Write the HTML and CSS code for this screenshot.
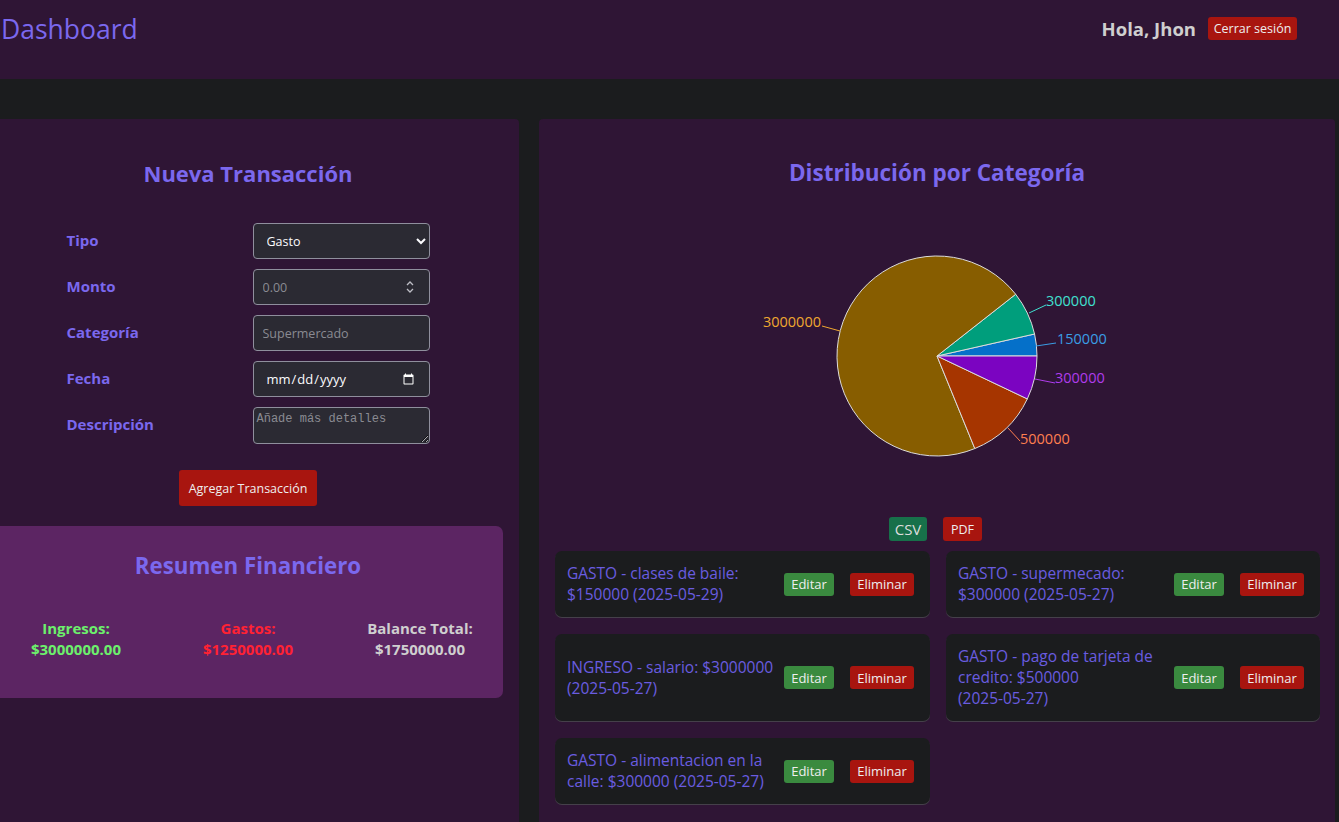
FILE: index.html
```html
<!DOCTYPE html>
<html lang="es">
<head>
<meta charset="utf-8">
<title>Dashboard</title>
<link rel="stylesheet" href="styles.css">
</head>
<body>
<header class="topbar">
  <h1 class="brand">Dashboard</h1>
  <div class="user">
    <span class="hello">Hola, Jhon</span>
    <button class="btn btn-red btn-logout">Cerrar sesión</button>
  </div>
</header>

<main class="layout">
  <section class="panel panel-left">
    <h2 class="panel-title">Nueva Transacción</h2>
    <form class="tx-form">
      <label class="f-label" for="tipo">Tipo</label>
      <select id="tipo" class="f-input">
        <option>Gasto</option>
        <option>Ingreso</option>
      </select>

      <label class="f-label" for="monto">Monto</label>
      <div class="num-wrap">
        <input id="monto" class="f-input f-num" type="number" placeholder="0.00">
        <svg class="spin" width="10" height="14" viewBox="0 0 10 14"><path d="M2 5 L5 2 L8 5 M2 9 L5 12 L8 9" fill="none" stroke="#bdbdc5" stroke-width="1.3"/></svg>
      </div>

      <label class="f-label" for="cat">Categoría</label>
      <input id="cat" class="f-input" type="text" placeholder="Supermercado">

      <label class="f-label" for="fecha">Fecha</label>
      <input id="fecha" class="f-input f-date" type="date">

      <label class="f-label" for="desc">Descripción</label>
      <textarea id="desc" class="f-input f-area" placeholder="Añade más detalles"></textarea>

      <div class="f-actions">
        <button type="button" class="btn btn-red btn-add">Agregar Transacción</button>
      </div>
    </form>

    <div class="summary">
      <h2 class="panel-title summary-title">Resumen Financiero</h2>
      <div class="stats">
        <div class="stat stat-in">Ingresos:<br>$3000000.00</div>
        <div class="stat stat-out">Gastos:<br>$1250000.00</div>
        <div class="stat stat-bal">Balance Total:<br>$1750000.00</div>
      </div>
    </div>
  </section>

  <section class="panel panel-right">
    <h2 class="panel-title title-chart">Distribución por Categoría</h2>
    <svg class="chart" viewBox="555 211 764 290" width="764" height="290">
      <g stroke="#dcdcdc" stroke-width="1">
        <path d="M937,356 L1037,356 A100,100 0 0,0 1034.55,334.01 Z" fill="#0570c9"/>
        <path d="M937,356 L1034.55,334.01 A100,100 0 0,0 1015.68,294.28 Z" fill="#009e7c"/>
        <path d="M937,356 L1015.68,294.28 A100,100 0 1,0 974.84,448.56 Z" fill="#875d00"/>
        <path d="M937,356 L974.84,448.56 A100,100 0 0,0 1027.32,398.91 Z" fill="#a63500"/>
        <path d="M937,356 L1027.32,398.91 A100,100 0 0,0 1037,356 Z" fill="#7b04c1"/>
      </g>
      <g fill="none" stroke-width="1">
        <polyline points="840,331 822,326" stroke="#f0a830"/>
        <polyline points="1029,313 1046,305" stroke="#40e0d0"/>
        <polyline points="1036,346 1056,343" stroke="#3a9ee6"/>
        <polyline points="1035,379 1055,383" stroke="#b03cec"/>
        <polyline points="1008,428 1020,441" stroke="#ff7f50"/>
      </g>
      <g class="chart-labels">
        <text x="821" y="327" text-anchor="end" fill="#f0a830">3000000</text>
        <text x="1046" y="306" fill="#40e0d0">300000</text>
        <text x="1057" y="344" fill="#3a9ee6">150000</text>
        <text x="1055" y="383" fill="#b03cec">300000</text>
        <text x="1020" y="444" fill="#ff7f50">500000</text>
      </g>
    </svg>

    <div class="exports">
      <button class="btn btn-csv">CSV</button>
      <button class="btn btn-red btn-pdf">PDF</button>
    </div>

    <div class="tx-grid">
      <div class="tx-card">
        <span class="tx-text">GASTO - clases de baile: $150000 (2025&#8288;-&#8288;05&#8288;-&#8288;29)</span>
        <div class="tx-actions"><button class="btn btn-green">Editar</button><button class="btn btn-red">Eliminar</button></div>
      </div>
      <div class="tx-card">
        <span class="tx-text">GASTO - supermecado: $300000 (2025&#8288;-&#8288;05&#8288;-&#8288;27)</span>
        <div class="tx-actions"><button class="btn btn-green">Editar</button><button class="btn btn-red">Eliminar</button></div>
      </div>
      <div class="tx-card">
        <span class="tx-text">INGRESO - salario: $3000000 (2025&#8288;-&#8288;05&#8288;-&#8288;27)</span>
        <div class="tx-actions"><button class="btn btn-green">Editar</button><button class="btn btn-red">Eliminar</button></div>
      </div>
      <div class="tx-card">
        <span class="tx-text">GASTO - pago de tarjeta de credito: $500000 (2025&#8288;-&#8288;05&#8288;-&#8288;27)</span>
        <div class="tx-actions"><button class="btn btn-green">Editar</button><button class="btn btn-red">Eliminar</button></div>
      </div>
      <div class="tx-card">
        <span class="tx-text">GASTO - alimentacion en la calle: $300000 (2025&#8288;-&#8288;05&#8288;-&#8288;27)</span>
        <div class="tx-actions"><button class="btn btn-green">Editar</button><button class="btn btn-red">Eliminar</button></div>
      </div>
    </div>
  </section>
</main>
</body>
</html>
```

FILE: styles.css
```css
* { box-sizing: border-box; }

html, body {
  margin: 0;
  padding: 0;
  background: #1b1c1e;
  overflow: hidden;
}

body {
  font-family: "Open Sans", "Noto Sans", sans-serif;
  color: #ddd;
  width: 1339px;
  height: 822px;
}

.topbar {
  height: 79px;
  background: #2f1535;
  display: flex;
  justify-content: space-between;
  align-items: flex-start;
  padding: 10px 42px 0 0;
}

.brand {
  margin: 0;
  font-size: 26.5px;
  font-weight: 400;
  line-height: 38px;
  color: #7b68ee;
  padding-left: 1px;
}

.user {
  display: flex;
  align-items: center;
  height: 36px;
  gap: 12px;
}

.hello {
  font-size: 18.5px;
  font-weight: 700;
  color: #cfcfcf;
}

.btn {
  border: none;
  border-radius: 3px;
  color: #eee;
  font-family: "Open Sans", "Noto Sans", sans-serif;
  font-size: 13px;
  cursor: pointer;
  padding: 0 6px;
}

.btn-red { background: #a8150f; }
.btn-green { background: #3a8a3f; }

.btn-logout {
  height: 23px;
  width: 89px;
  padding: 0;
  font-size: 12.5px;
}

.layout {
  display: flex;
  gap: 20px;
  margin-top: 40px;
  margin-left: -23px;
}

.panel {
  background: #2f1535;
  border-radius: 4px;
  padding: 16px;
  height: 720px;
  flex: none;
}

.panel-left { width: 542px; }
.panel-right { width: 796px; }

.panel-title {
  margin: 20px 0;
  text-align: center;
  font-size: 22px;
  line-height: 36px;
  font-weight: 700;
  color: #7b68ee;
}

.title-chart { font-size: 22.5px; }

.tx-form {
  width: 363px;
  margin: 32px auto 0;
  display: grid;
  grid-template-columns: 186px 177px;
  row-gap: 10px;
  align-items: center;
}

.f-label {
  font-size: 15px;
  font-weight: 700;
  color: #7b68ee;
  margin-top: -3px;
}

.f-input {
  width: 177px;
  height: 36px;
  background: #2b2a33;
  border: 1px solid #8f8f9d;
  border-radius: 4px;
  color: #fbfbfe;
  font-family: "Open Sans", "Noto Sans", sans-serif;
  font-size: 12.5px;
  padding: 0 9px;
  color-scheme: dark;
  outline: none;
}

.f-input::placeholder { color: #8a8a92; }

.num-wrap { position: relative; }

.f-num { appearance: textfield; -moz-appearance: textfield; }
.f-num::-webkit-inner-spin-button,
.f-num::-webkit-outer-spin-button { -webkit-appearance: none; margin: 0; }

.spin {
  position: absolute;
  right: 15px;
  top: 11px;
}

.f-date { font-size: 13px; padding: 0 12px; }

.f-area {
  height: 37px;
  resize: both;
  font-family: "Liberation Mono", "DejaVu Sans Mono", monospace;
  font-size: 12px;
  padding: 4px 3px;
}

.f-actions {
  grid-column: 1 / -1;
  display: flex;
  justify-content: center;
  margin-top: 16px;
}

.btn-add {
  height: 36px;
  width: 138px;
  padding: 0;
  font-size: 12.5px;
}

.summary {
  margin-top: 20px;
  background: #5c2563;
  border-radius: 7px;
  padding: 16px 0;
  height: 172px;
}

.summary-title { margin: 6px 0 0; font-size: 22.3px; }

.stats {
  display: grid;
  grid-template-columns: 1fr 1fr 1fr;
  margin: 34px -3px 0;
  text-align: center;
  font-size: 15px;
  line-height: 21px;
  font-weight: 700;
}

.stat-in { color: #6cf06c; }
.stat-out { color: #ff2233; }
.stat-bal { color: #cfcfcf; }

.chart {
  display: block;
  margin: 0;
}

.chart-labels text {
  font-family: "Open Sans", "Noto Sans", sans-serif;
  font-size: 14.5px;
}

.exports {
  display: flex;
  justify-content: center;
  gap: 16px;
  margin-top: 16px;
  padding-right: 3px;
}

.btn-csv {
  background: #17704a;
  height: 24px;
  width: 38px;
  padding: 0;
  font-size: 15px;
  color: #ddd;
}

.btn-pdf {
  height: 24px;
  width: 39px;
  padding: 0;
  font-size: 12.5px;
}

.tx-grid {
  margin-top: 10px;
  display: grid;
  grid-template-columns: 375px 374px;
  gap: 17px 16px;
}

.tx-card {
  background: #1b1c1e;
  border-radius: 7px;
  box-shadow: 0 1px 0 #45404a;
  display: flex;
  align-items: center;
  padding: 12px 16px 12px 12px;
}

.tx-text {
  flex: 1;
  font-size: 15.5px;
  line-height: 21px;
  color: #6a5ce0;
}

.tx-actions {
  display: flex;
  gap: 16px;
  margin-left: 8px;
}

.tx-actions .btn {
  height: 23px;
  font-size: 13px;
}

.tx-actions .btn-green { width: 50px; padding: 0; }
.tx-actions .btn-red { width: 64px; padding: 0; }
```
